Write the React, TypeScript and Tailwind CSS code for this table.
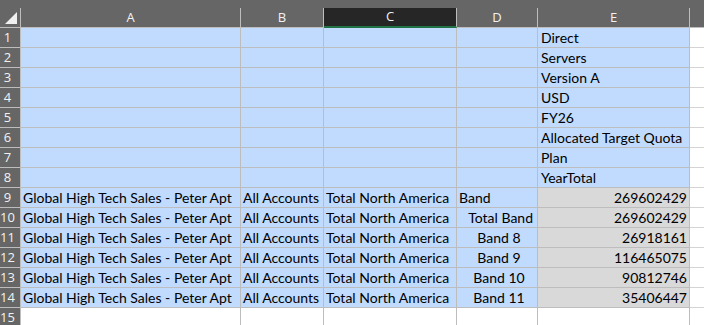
const cols = ["A", "B", "C", "D", "E"];

type Row = { a?: string; b?: string; c?: string; d?: string; dAlign?: string; e?: string; eNum?: boolean };

const rows: Row[] = [
  { e: "Direct" },
  { e: "Servers" },
  { e: "Version A" },
  { e: "USD" },
  { e: "FY26" },
  { e: "Allocated Target Quota" },
  { e: "Plan" },
  { e: "YearTotal" },
  { a: "Global High Tech Sales - Peter Apt", b: "All Accounts", c: "Total North America", d: "Band", dAlign: "text-left pl-[2px]", e: "269602429", eNum: true },
  { a: "Global High Tech Sales - Peter Apt", b: "All Accounts", c: "Total North America", d: "Total Band", dAlign: "text-right pr-[4px]", e: "269602429", eNum: true },
  { a: "Global High Tech Sales - Peter Apt", b: "All Accounts", c: "Total North America", d: "Band 8", dAlign: "text-center pl-[6px]", e: "26918161", eNum: true },
  { a: "Global High Tech Sales - Peter Apt", b: "All Accounts", c: "Total North America", d: "Band 9", dAlign: "text-center pl-[6px]", e: "116465075", eNum: true },
  { a: "Global High Tech Sales - Peter Apt", b: "All Accounts", c: "Total North America", d: "Band 10", dAlign: "text-center pl-[6px]", e: "90812746", eNum: true },
  { a: "Global High Tech Sales - Peter Apt", b: "All Accounts", c: "Total North America", d: "Band 11", dAlign: "text-center pl-[6px]", e: "35406447", eNum: true },
];

const grid = "grid grid-cols-[21px_220px_83px_133px_81px_152px_1fr]";
const cell = "h-[20px] border-r border-b border-[#bdbdbd] px-[2px] flex items-end pb-[2px] whitespace-nowrap overflow-hidden";

export default function App() {
  return (
    <div className="w-[704px] h-[325px] bg-white overflow-hidden text-black" style={{ fontFamily: "Lato, 'Noto Sans', sans-serif" }}>
      <div className="h-[8px] bg-[#666666]" />
      {/* column headers */}
      <div className={`${grid} bg-[#666666] text-[#f2f2f2] text-[13px]`} style={{ fontFamily: "'Open Sans', 'Noto Sans', sans-serif" }}>
        <div className="h-[20px] border-r border-b border-[#bdbdbd] relative">
          <svg className="absolute left-[5px] top-[4px]" width="12" height="12" viewBox="0 0 12 12">
            <polygon points="12,0 12,12 0,12" fill="#f0f0f0" />
          </svg>
        </div>
        {cols.map((c) => (
          <div
            key={c}
            className={`h-[20px] border-r border-[#bdbdbd] flex items-center justify-center ${
              c === "C" ? "bg-[#262626] border-b-2 border-b-[#217346]" : "border-b"
            }`}
          >
            {c}
          </div>
        ))}
        <div className="h-[20px] border-b border-[#bdbdbd]" />
      </div>
      {/* rows */}
      {[...rows, {} as Row].map((r, i) => {
        const sel = i < 14;
        const blue = sel ? "bg-[#c0dbfd]" : "bg-white";
        return (
          <div key={i} className={`${grid} text-[14px] leading-none`}>
            <div
              className="h-[20px] bg-[#666666] text-[#f2f2f2] text-[13px] border-r border-b border-[#bdbdbd] flex items-center justify-center pr-[5px]"
              style={{ fontFamily: "'Open Sans', 'Noto Sans', sans-serif" }}
            >
              {i + 1}
            </div>
            <div className={`${cell} ${blue}`}>{r.a}</div>
            <div className={`${cell} ${blue}`}>{r.b}</div>
            <div className={`${cell} ${blue}`}>{r.c}</div>
            <div className={`${cell} ${blue} ${r.dAlign ?? ""}`}>
              <span className="w-full">{r.d}</span>
            </div>
            <div className={`${cell} ${r.eNum ? "bg-[#d9d9d9] justify-end" : blue} ${r.eNum ? "" : "pl-[3px]"}`}>{r.e}</div>
            <div className="h-[20px] border-b border-[#d4d4d4] bg-white" />
          </div>
        );
      })}
    </div>
  );
}
